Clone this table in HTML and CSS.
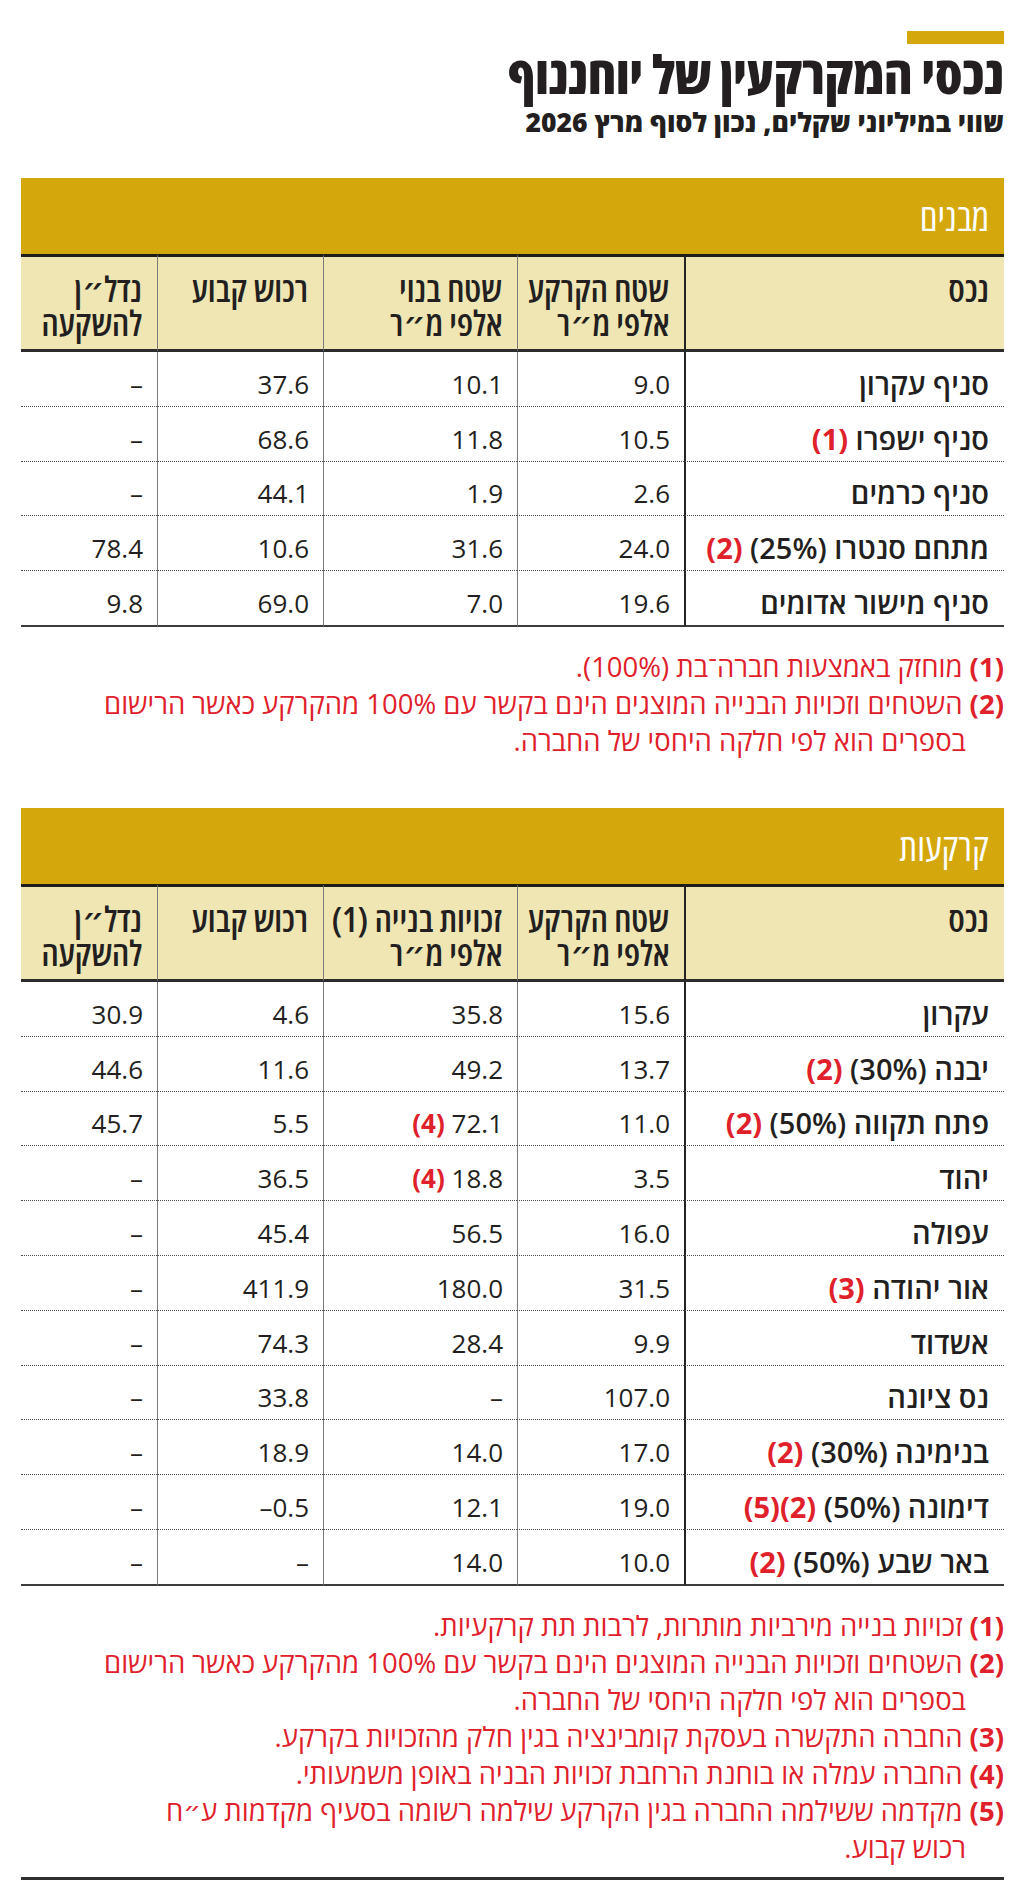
FILE: index.html
```html
<!DOCTYPE html>
<html lang="he" dir="rtl">
<head>
<meta charset="utf-8">
<title>נכסי המקרקעין של יוחננוף</title>
<link rel="stylesheet" href="styles.css">
</head>
<body>
<div class="page">
  <header class="head">
    <div class="accent"></div>
    <h1 class="title">נכסי המקרקעין של יוחננוף</h1>
    <p class="subtitle">שווי במיליוני שקלים, נכון לסוף מרץ 2026</p>
  </header>

  <section class="block block-first">
    <div class="band">מבנים</div>
    <table class="grid">
      <colgroup>
        <col class="c1"><col class="c2"><col class="c3"><col class="c4"><col class="c5">
      </colgroup>
      <thead>
        <tr>
          <th>נכס</th>
          <th>שטח הקרקע<br>אלפי מ״ר</th>
          <th>שטח בנוי<br>אלפי מ״ר</th>
          <th>רכוש קבוע</th>
          <th>נדל״ן<br>להשקעה</th>
        </tr>
      </thead>
      <tbody>
        <tr><td class="name">סניף עקרון</td><td>9.0</td><td>10.1</td><td>37.6</td><td>–</td></tr>
        <tr><td class="name">סניף ישפרו <span class="ref">(1)</span></td><td>10.5</td><td>11.8</td><td>68.6</td><td>–</td></tr>
        <tr><td class="name">סניף כרמים</td><td>2.6</td><td>1.9</td><td>44.1</td><td>–</td></tr>
        <tr><td class="name">מתחם סנטרו (25%) <span class="ref">(2)</span></td><td>24.0</td><td>31.6</td><td>10.6</td><td>78.4</td></tr>
        <tr class="last"><td class="name">סניף מישור אדומים</td><td>19.6</td><td>7.0</td><td>69.0</td><td>9.8</td></tr>
      </tbody>
    </table>
    <ol class="notes">
      <li><b>(1)</b> מוחזק באמצעות חברה־בת (100%).</li>
      <li><b>(2)</b> השטחים וזכויות הבנייה המוצגים הינם בקשר עם 100% מהקרקע כאשר הרישום<br>בספרים הוא לפי חלקה היחסי של החברה.</li>
    </ol>
  </section>

  <section class="block block-second">
    <div class="band">קרקעות</div>
    <table class="grid">
      <colgroup>
        <col class="c1"><col class="c2"><col class="c3"><col class="c4"><col class="c5">
      </colgroup>
      <thead>
        <tr>
          <th>נכס</th>
          <th>שטח הקרקע<br>אלפי מ״ר</th>
          <th>זכויות בנייה (1)<br>אלפי מ״ר</th>
          <th>רכוש קבוע</th>
          <th>נדל״ן<br>להשקעה</th>
        </tr>
      </thead>
      <tbody>
        <tr><td class="name">עקרון</td><td>15.6</td><td>35.8</td><td>4.6</td><td>30.9</td></tr>
        <tr><td class="name">יבנה (30%) <span class="ref">(2)</span></td><td>13.7</td><td>49.2</td><td>11.6</td><td>44.6</td></tr>
        <tr><td class="name">פתח תקווה (50%) <span class="ref">(2)</span></td><td>11.0</td><td>72.1 <span class="ref">(4)</span></td><td>5.5</td><td>45.7</td></tr>
        <tr><td class="name">יהוד</td><td>3.5</td><td>18.8 <span class="ref">(4)</span></td><td>36.5</td><td>–</td></tr>
        <tr><td class="name">עפולה</td><td>16.0</td><td>56.5</td><td>45.4</td><td>–</td></tr>
        <tr><td class="name">אור יהודה <span class="ref">(3)</span></td><td>31.5</td><td>180.0</td><td>411.9</td><td>–</td></tr>
        <tr><td class="name">אשדוד</td><td>9.9</td><td>28.4</td><td>74.3</td><td>–</td></tr>
        <tr><td class="name">נס ציונה</td><td>107.0</td><td>–</td><td>33.8</td><td>–</td></tr>
        <tr><td class="name">בנימינה (30%) <span class="ref">(2)</span></td><td>17.0</td><td>14.0</td><td>18.9</td><td>–</td></tr>
        <tr><td class="name">דימונה (50%) <span class="ref">(2)(5)</span></td><td>19.0</td><td>12.1</td><td><bdi dir="ltr">–0.5</bdi></td><td>–</td></tr>
        <tr class="last"><td class="name">באר שבע (50%) <span class="ref">(2)</span></td><td>10.0</td><td>14.0</td><td>–</td><td>–</td></tr>
      </tbody>
    </table>
    <ol class="notes">
      <li><b>(1)</b> זכויות בנייה מירביות מותרות, לרבות תת קרקעיות.</li>
      <li><b>(2)</b> השטחים וזכויות הבנייה המוצגים הינם בקשר עם 100% מהקרקע כאשר הרישום<br>בספרים הוא לפי חלקה היחסי של החברה.</li>
      <li><b>(3)</b> החברה התקשרה בעסקת קומבינציה בגין חלק מהזכויות בקרקע.</li>
      <li><b>(4)</b> החברה עמלה או בוחנת הרחבת זכויות הבניה באופן משמעותי.</li>
      <li><b>(5)</b> מקדמה ששילמה החברה בגין הקרקע שילמה רשומה בסעיף מקדמות ע״ח<br>רכוש קבוע.</li>
    </ol>
  </section>

  <div class="endrule"></div>
</div>
</body>
</html>
```
FILE: styles.css
```css
html, body {
  margin: 0;
  padding: 0;
  background: #ffffff;
}

body {
  font-family: "Open Sans", "DejaVu Sans", sans-serif;
  color: #231f20;
}

.page {
  width: 1024px;
  box-sizing: border-box;
  padding: 0 20px 0 21px;
}

/* ---------- heading ---------- */
.accent {
  width: 97px;
  height: 13px;
  margin-top: 31px;
  background: #d4a80c;
}

.title {
  margin: 0;
  font-size: 53px;
  line-height: 60px;
  font-weight: 800;
  font-stretch: 75%;
}

.subtitle {
  margin: 0;
  font-size: 26.5px;
  line-height: 36px;
  font-weight: 800;
  font-stretch: 100%;
}

/* ---------- sections ---------- */
.block-first { margin-top: 38px; }
.block-second { margin-top: 49px; }

.band {
  height: 76px;
  padding-right: 15px;
  background: #d4a80c;
  color: #ffffff;
  font-size: 38px;
  line-height: 76px;
  font-weight: 500;
  font-stretch: 75%;
}

/* ---------- table ---------- */
.grid {
  width: 100%;
  table-layout: fixed;
  border-collapse: separate;
  border-spacing: 0;
}

.c1 { width: 320px; }
.c2 { width: 167px; }
.c3 { width: 194px; }
.c4 { width: 166px; }
.c5 { width: 136px; }

.grid th {
  height: 77px;
  box-sizing: content-box;
  padding: 15px 15px 0 2px;
  vertical-align: top;
  text-align: right;
  background: #f0e6b4;
  border-top: 3px solid #1d1d1b;
  border-bottom: 3px solid #2b2b2b;
  font-size: 35px;
  line-height: 34px;
  font-weight: 600;
  font-stretch: 75%;
  color: #231f20;
  white-space: nowrap;
}

.grid td {
  height: 43.8px;
  box-sizing: content-box;
  padding: 10px 14px 0 6px;
  vertical-align: middle;
  text-align: right;
  border-bottom: 1px dotted #4a4a4a;
  font-size: 26px;
  line-height: 30px;
  font-weight: 400;
  white-space: nowrap;
}

.grid th:first-child,
.grid td:first-child {
  border-left: 2px solid #242424;
}

.grid th:nth-child(2),
.grid th:nth-child(3),
.grid th:nth-child(4),
.grid td:nth-child(2),
.grid td:nth-child(3),
.grid td:nth-child(4) {
  border-left: 1px solid #7c7c7c;
}

.grid td.name {
  padding-right: 15px;
  font-size: 29px;
  font-weight: 600;
}

.grid .ref {
  color: #e0202a;
  font-weight: 700;
}

.grid tr.last td {
  border-bottom: 2px solid #3c3c3c;
}

/* ---------- notes ---------- */
.notes {
  list-style: none;
  margin: 21px 0 0;
  padding: 0 38px 0 0;
  color: #e0202a;
  font-size: 27.5px;
  line-height: 37px;
  font-weight: 400;
  font-stretch: 100%;
}

.notes li {
  text-indent: -38px;
}

.notes b {
  font-weight: 700;
}

.endrule {
  height: 3px;
  margin-top: 11px;
  background: #303030;
}
```
